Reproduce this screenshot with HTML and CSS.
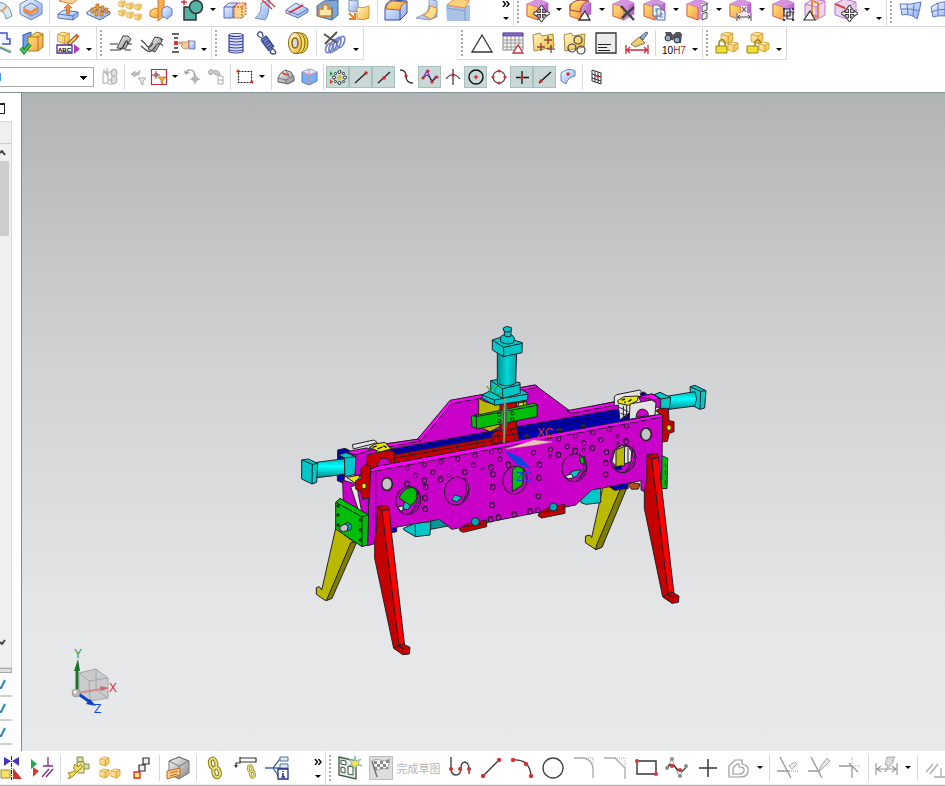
FILE: index.html
```
<!DOCTYPE html>
<html lang="zh-CN">

<head>
    <meta charset="UTF-8">
    <title>CAD</title>
    <link rel="stylesheet" href="styles.css">
</head>

<body>
    <!-- shared icon parts -->
    <svg class="defs" width="0" height="0">
        <defs>
            <linearGradient id="blue" x1="0" y1="0" x2="1" y2="1">
                <stop offset="0" stop-color="#f4f9ff" />
                <stop offset="1" stop-color="#8aabec" />
            </linearGradient>
            <linearGradient id="gold" x1="0" y1="0" x2="1" y2="1">
                <stop offset="0" stop-color="#fff7c8" />
                <stop offset="1" stop-color="#f3b83a" />
            </linearGradient>
            <linearGradient id="orange" x1="0" y1="0" x2="1" y2="1">
                <stop offset="0" stop-color="#ffe873" />
                <stop offset="1" stop-color="#f79b4c" />
            </linearGradient>
            <linearGradient id="violet" x1="0" y1="0" x2="1" y2="0">
                <stop offset="0" stop-color="#f6e6fa" />
                <stop offset="1" stop-color="#b85ccb" />
            </linearGradient>
            <linearGradient id="steel" x1="0" y1="0" x2="1" y2="1">
                <stop offset="0" stop-color="#fafafa" />
                <stop offset="1" stop-color="#858585" />
            </linearGradient>
            <linearGradient id="cylinder" x1="0" y1="0" x2="0" y2="1">
                <stop offset="0" stop-color="#00b4b4" />
                <stop offset=".4" stop-color="#00ffff" />
                <stop offset="1" stop-color="#008f8f" />
            </linearGradient>
            <linearGradient id="column" x1="0" y1="0" x2="1" y2="0">
                <stop offset="0" stop-color="#008f8f" />
                <stop offset=".5" stop-color="#00d8d8" />
                <stop offset="1" stop-color="#00a0a0" />
            </linearGradient>
            <symbol id="syncCube" viewBox="0 0 24 24">
                <path d="M1 6 12 1 22 5 22 16 12 22 1 18Z" fill="url(#violet)" stroke="#a670b5" stroke-width=".7" />
                <path d="M1 6 12 9 12 22 1 18Z" fill="url(#orange)" stroke="#e2502a" stroke-width=".8" />
                <path d="M1 6 12 1 22 5 12 9Z" fill="#d593e0" />
            </symbol>
            <symbol id="goldCube" viewBox="0 0 12 12">
                <path d="M1 3 5 1 11 2 11 8 7 11 1 9Z" fill="url(#gold)" stroke="#c99028" stroke-width=".7" />
                <path d="M1 3 7 4.500 11 2M7 4.500V11" fill="none" stroke="#c99028" stroke-width=".7" />
            </symbol>
            <symbol id="cross4" viewBox="0 0 16 16">
                <path d="M8 0 11 4H9V7H12V5L16 8 12 11V9H9V12H11L8 16 5 12H7V9H4V11L0 8 4 5V7H7V4H5Z" fill="#fff" stroke="#444" stroke-width="1" />
            </symbol>
            <symbol id="caret" viewBox="0 0 6 3">
                <path d="M0 0H6L3 3Z" />
            </symbol>
            <symbol id="chevrons" viewBox="0 0 8 6">
                <path d="M1 0 3.500 3 1 6M4.500 0 7 3 4.500 6" fill="none" stroke="#000" stroke-width="1.400" />
            </symbol>
            <symbol id="chain" viewBox="0 0 16 24">
                <g fill="none" stroke="#85781a" stroke-width="4">
                    <ellipse cx="6" cy="7.500" rx="3.200" ry="5" transform="rotate(-12 6 7)" />
                    <ellipse cx="9.500" cy="16.500" rx="3.200" ry="5" transform="rotate(-12 9 16)" />
                </g>
                <g fill="none" stroke="#eee07a" stroke-width="2">
                    <ellipse cx="6" cy="7.500" rx="3.200" ry="5" transform="rotate(-12 6 7)" />
                    <ellipse cx="9.500" cy="16.500" rx="3.200" ry="5" transform="rotate(-12 9 16)" />
                </g>
            </symbol>
            <symbol id="hole" viewBox="-8 -9 16 18">
                <ellipse rx="6.500" ry="7.500" fill="#9d009d" stroke="#2d1030" stroke-width="2.800" />
                <path d="M-3 4Q3 5 4-2" fill="none" stroke="#ff35ff" stroke-width="2" />
            </symbol>
        </defs>
    </svg>

    <header class="toolbars">
        <div class="row row--offset">
            <div class="bar">
                <button class="tool" title="Revolve"><svg class="icon" viewBox="0 0 24 24"><path d="M8 4Q22 4 24 18L18 21Q17 12 8 11Z" fill="#dbe7ee" stroke="#8096a4" /><path d="M13 14 19 8" stroke="#f0a050" stroke-width="2" /></svg></button>
                <button class="tool" title="Emboss"><svg class="icon" viewBox="0 0 24 24"><path d="M12 0 23 6V16L12 22 1 16V6Z" fill="url(#blue)" stroke="#6f87b5" /><path d="M12 5 19 9V14L12 18 5 14V9Z" fill="#c9daf7" stroke="#6683bd" /><path d="M5 10 12 13 19 8V12L12 17 5 14Z" fill="#f58b3b" /></svg></button>
                <span class="sep"></span>
                <button class="tool" title="Offset"><svg class="icon" viewBox="0 0 24 24"><path d="M3 3 9 0 22 1 16 6Z" fill="#ffd29a" stroke="#e48745" /><path d="M2 16 8 12 22 14V18L17 22 2 20Z" fill="url(#blue)" stroke="#556fc0" /><path d="M2 16 17 18 22 14M17 18V22" fill="none" stroke="#556fc0" /><path d="M12 6 16 10H13.500V16H10.500V10H8Z" fill="#f58a2c" stroke="#b45716" stroke-width=".6" /></svg></button>
                <button class="tool" title="Pattern Feature"><svg class="icon" viewBox="0 0 24 24"><path d="M0 14 10 8 23 14V16L13 22 0 16Z" fill="url(#blue)" stroke="#4d6e9c" /><g fill="#f2a23a" stroke="#9a5a18" stroke-width=".6"><path d="M4 10h3v5H4zM9 6h3v6H9zM14 8h3v6h-3zM8 12h3v6H8zM13 13h3v5h-3zM18 10h3v5h-3z" /></g></svg></button>
                <button class="tool" title="Pattern Geometry"><svg class="icon" viewBox="0 0 24 24"><use href="#goldCube" x="0" y="2" width="8" height="8" /><use href="#goldCube" x="8" y="4" width="8" height="8" /><use href="#goldCube" x="16" y="5" width="8" height="8" /><use href="#goldCube" x="0" y="11" width="8" height="8" /><use href="#goldCube" x="8" y="13" width="8" height="8" /><use href="#goldCube" x="16" y="15" width="8" height="8" /></svg></button>
                <button class="tool" title="Mirror Feature"><svg class="icon" viewBox="0 0 24 24"><path d="M1 13 6 10 11 12V18L6 20 1 18Z" fill="url(#orange)" stroke="#c77a26" /><path d="M9 2 15 0V18L9 23Z" fill="#f9ae49" stroke="#d27728" /><path d="M13 11 18 8 23 11V17L18 21 13 18Z" fill="url(#blue)" stroke="#5a7cbf" /></svg></button>
                <button class="tool" title="Unite"><svg class="icon" viewBox="0 0 24 24"><path d="M4 9H16V22H4Z" fill="#54b3a4" stroke="#333" stroke-width="1.500" /><circle cx="16" cy="9" r="6.500" fill="#54b3a4" stroke="#333" stroke-width="1.500" /><path d="M4 1V7M1 4H7" stroke="#d9363e" stroke-width="1.500" /></svg></button>
                <button class="drop" title="More"><svg viewBox="0 0 6 3"><use href="#caret" /></svg></button>
                <button class="tool" title="Trim Body"><svg class="icon" viewBox="0 0 24 24"><path d="M1 9 6 5H15V16L10 20H1Z" fill="url(#blue)" stroke="#5869b8" /><path d="M1 9H10V20M10 9 15 5" fill="none" stroke="#5869b8" /><path d="M11 9 15 5H23V16L19 20H11Z" fill="#fbd889" stroke="#d33a3a" stroke-dasharray="2 1" /><path d="M11 9H19V20M19 9 23 5" fill="none" stroke="#d33a3a" stroke-dasharray="2 1" /></svg></button>
                <button class="tool" title="Trim Sheet"><svg class="icon" viewBox="0 0 24 24"><path d="M1 20Q8 16 7 5L15 2Q16 16 11 22Z" fill="url(#blue)" stroke="#7690b8" /><path d="M8 2 18 11M12 0 21 9" stroke="#d63940" stroke-width="1.300" /></svg></button>
                <button class="tool" title="Divide Face"><svg class="icon" viewBox="0 0 24 24"><path d="M1 12 11 5 23 11V14L13 20 1 15Z" fill="url(#blue)" stroke="#6177bd" /><path d="M1 12 13 17 23 11" fill="none" stroke="#6177bd" /><path d="M4 15 18 7" stroke="#e02d32" stroke-width="1.500" /></svg></button>
                <button class="tool" title="Shell"><svg class="icon" viewBox="0 0 24 24"><path d="M1 8 8 3 22 2V17L16 22 1 18Z" fill="#7ba7d8" stroke="#456d9b" /><path d="M3 11H7V7H12V11H16V18H3Z" fill="#ffe9a8" stroke="#d58433" stroke-width="1.500" /><path d="M16 9V22" stroke="#456d9b" /></svg></button>
                <button class="tool" title="Replace"><svg class="icon" viewBox="0 0 24 24"><path d="M2 2Q6 4 11 2V13Q6 15 2 13Z" fill="url(#blue)" stroke="#7b92ba" /><path d="M10 9Q16 11 22 8V20Q16 23 10 21Z" fill="url(#gold)" stroke="#d19535" /><path d="M2 15 7 20M8 15V21H2" fill="none" stroke="#ef7d26" stroke-width="2" /></svg></button>
                <span class="sep"></span>
                <button class="tool" title="Edge Blend"><svg class="icon" viewBox="0 0 24 24"><path d="M1 10Q2 4 8 2L23 3V15L16 22H1Z" fill="url(#blue)" stroke="#3548ac" /><path d="M2 10Q3 5 8 3L23 4Q17 6 16 12L2 11Z" fill="url(#orange)" stroke="#b36622" /><path d="M16 12V22" stroke="#3548ac" /></svg></button>
                <button class="tool" title="Face Blend"><svg class="icon" viewBox="0 0 24 24"><path d="M14 1 22 3V19L14 22 1 20 9 16Q15 14 14 1Z" fill="url(#blue)" stroke="#86a0c7" /><path d="M22 10 15 8Q14 15 8 17L16 21Q22 18 22 10Z" fill="#ffe08a" stroke="#ea8636" /></svg></button>
                <button class="tool" title="Draft"><svg class="icon" viewBox="0 0 24 24"><path d="M0 7H24V23H1Z" fill="#a9c3e6" /><path d="M17 0H24V8Z" fill="#c6eef0" /><path d="M1 7 8 1 23 2 19 10Z" fill="#fcd27d" stroke="#ed8251" /><path d="M19 10V23M1 10 19 13" stroke="#8d9cc4" /></svg></button>
                <button class="overflow overflow--end" title="Toolbar Options"><svg width="8" height="6"><use href="#chevrons" /></svg><svg width="6" height="3"><use href="#caret" /></svg></button>
            </div>
            <div class="bar">
                <span class="grip"></span>
                <button class="tool" title="Move Face"><svg class="icon" viewBox="0 0 24 24"><use href="#syncCube" width="24" height="24" /><use href="#cross4" x="7" y="7" width="17" height="17" /></svg></button>
                <button class="drop" title="More"><svg viewBox="0 0 6 3"><use href="#caret" /></svg></button>
                <button class="tool" title="Pull Face"><svg class="icon" viewBox="0 0 24 24"><use href="#syncCube" width="24" height="24" /><path d="M1 9Q3 2 12 2L20 3Q12 5 11 14L1 12Z" fill="url(#orange)" stroke="#9d3e49" /><path d="M16 13 21 22H10Z" fill="#fff" stroke="#333" stroke-width="1.300" /></svg></button>
                <button class="drop" title="More"><svg viewBox="0 0 6 3"><use href="#caret" /></svg></button>
                <button class="tool" title="Delete Face"><svg class="icon" viewBox="0 0 24 24"><use href="#syncCube" width="24" height="24" /><path d="M9 8 22 22M22 9 10 20" stroke="#444" stroke-width="2.500" /></svg></button>
                <button class="tool" title="Copy Face"><svg class="icon" viewBox="0 0 24 24"><use href="#syncCube" width="24" height="24" /><path d="M10 7H15L18 10V18H10ZM14 11H19L22 14V22H14Z" fill="#eef5ff" stroke="#536c9f" /><path d="M12 11H15M12 13H14M16 16H20M16 19H20" stroke="#4f87d4" /></svg></button>
                <button class="drop" title="More"><svg viewBox="0 0 6 3"><use href="#caret" /></svg></button>
                <button class="tool" title="Make Coplanar"><svg class="icon" viewBox="0 0 24 24"><use href="#syncCube" width="24" height="24" /><path d="M15 6H23V23H15Z" fill="#fff" /><path d="M16 8 21 6V12L16 14ZM16 16 21 14V20L16 22Z" fill="#e6eeee" stroke="#4d4d4d" /></svg></button>
                <button class="drop" title="More"><svg viewBox="0 0 6 3"><use href="#caret" /></svg></button>
                <button class="tool" title="Linear Dimension"><svg class="icon" viewBox="0 0 24 24"><use href="#syncCube" width="24" height="24" /><path d="M7 15H23V23H7ZM12 8H18V15H12Z" fill="#fff" opacity=".8" /><path d="M8 15V23M22 15V23M9 19H21M11 17 8.500 19 11 21M19 17 21.500 19 19 21M13 9 17 14M17 9 13 14" fill="none" stroke="#444" /></svg></button>
                <button class="drop" title="More"><svg viewBox="0 0 6 3"><use href="#caret" /></svg></button>
                <button class="tool" title="Group Face"><svg class="icon" viewBox="0 0 24 24"><use href="#syncCube" width="24" height="24" /><path d="M12 11H21V21H12Z" fill="#fff" opacity=".7" /><path d="M12 11H18V18H12ZM15 14H21V21H15Z" fill="none" stroke="#333" stroke-width="1.200" /><path d="M11 10h2v2h-2zM20 10h2v2h-2zM11 21h2v2h-2zM20 21h2v2h-2z" fill="#20309d" /></svg></button>
                <button class="tool" title="Edit Section"><svg class="icon" viewBox="0 0 24 24"><path d="M2 6 10 1 22 3V17L13 22 2 18Z" fill="#ecd6f0" stroke="#b77cc5" /><path d="M9 3 15 5V19L9 17Z" fill="#f7e6ff" stroke="#f0883c" stroke-width="2" /><path d="M2 6 13 9 22 3M13 9V22" fill="none" stroke="#b77cc5" /><path d="M7 13 12 22H1Z" fill="#fff" stroke="#333" stroke-width="1.200" /></svg></button>
                <button class="tool" title="Move Edge"><svg class="icon" viewBox="0 0 24 24"><path d="M1 6 10 1 22 4V16L13 21 1 17Z" fill="#ead3ef" stroke="#b77cc5" /><path d="M1 6 12 11 22 4M12 11V21" fill="none" stroke="#b77cc5" /><path d="M1 6 11 10" stroke="#e3453e" stroke-width="2" /><use href="#cross4" x="7" y="7" width="17" height="17" /></svg></button>
                <button class="drop" title="More"><svg viewBox="0 0 6 3"><use href="#caret" /></svg></button>
                <button class="overflow" title="Toolbar Options"><svg width="8" height="6"></svg><svg width="6" height="3"><use href="#caret" /></svg></button>
            </div>
            <div class="bar bar--open">
                <span class="grip"></span>
                <button class="tool" title="Ruled"><svg class="icon" viewBox="0 0 24 24"><path d="M1 6Q12 7 22 4Q21 12 18 21Q11 15 3 17Z" fill="url(#blue)" stroke="#5a75cc" /><path d="M8 6 9 16M15 5 14 18M2 11Q12 10 20 13" fill="none" stroke="#5a75cc" /></svg></button>
                <button class="tool" title="Through Curves"><svg class="icon" viewBox="0 0 24 24"><path d="M1 9Q10 2 24 4V20Q12 16 3 19Z" fill="url(#blue)" stroke="#5a75cc" /><path d="M8 5V17M15 4V18M1 14Q10 10 24 12" fill="none" stroke="#5a75cc" /></svg></button>
            </div>
        </div>

        <div class="row row--offset">
            <div class="bar">
                <button class="tool" title="Project Curve"><svg class="icon" viewBox="0 0 24 24"><path d="M12 2H19V8H22V13H14" fill="#eef3ff" stroke="#4053d8" stroke-width="1.500" /><path d="M12 16 23 21" stroke="#5796b0" stroke-width="3" /><path d="M12 15 23 20" stroke="#f3e487" /></svg></button>
                <button class="tool" title="Check Geometry"><svg class="icon" viewBox="0 0 24 24"><path d="M4 4 12 1V17L4 20Z" fill="#6f9fec" stroke="#315aa5" /><path d="M12 5 18 1 24 3V16L19 20H9V6Z" fill="url(#orange)" stroke="#ad7b18" /><path d="M9 6H19L24 3M19 6V20" fill="none" stroke="#ad7b18" /><path d="M2 17 5 21 11 13" fill="none" stroke="#16882b" stroke-width="4" /><path d="M2 17 5 21 11 13" fill="none" stroke="#55c25d" stroke-width="2" /></svg></button>
                <span class="sep"></span>
                <button class="tool" title="PMI Note"><svg class="icon" viewBox="0 0 24 24"><use href="#goldCube" x="0" y="0" width="15" height="14" /><path d="M12 14 20 6" stroke="#7d5d29" stroke-width="4" /><path d="M13 13 20 6" stroke="#f6cf4c" stroke-width="2" /><path d="M20 6 22 4" stroke="#e25240" stroke-width="4" /><path d="M1 14H16V22H1Z" fill="#fff" stroke="#4b3191" stroke-width="1.300" /><text class="icon-text" x="2" y="21">ABC</text><path d="M18 13 24 18 18 23Z" fill="#b13ec0" /></svg></button>
                <button class="drop" title="More"><svg viewBox="0 0 6 3"><use href="#caret" /></svg></button>
            </div>
            <div class="bar">
                <span class="grip"></span>
                <button class="tool" title="Sheet Tab"><svg class="icon" viewBox="0 0 24 24"><path d="M8 17 14 5H19L22 8 16 18Z" fill="url(#steel)" stroke="#444" /><path d="M1 13H9M1 19H11Q14 17 16 12 18 7 19 13H23M16 19H22" fill="none" stroke="#333" stroke-width="1.200" /></svg></button>
                <button class="tool" title="Bend"><svg class="icon" viewBox="0 0 24 24"><path d="M8 18 15 6 20 7 22 10 15 21Z" fill="url(#steel)" stroke="#444" /><path d="M1 9Q4 11 7 15 10 18 13 12M1 15 6 19Q11 23 15 16 19 9 23 15M20 7 23 9" fill="none" stroke="#444" stroke-width="1.200" /></svg></button>
                <button class="tool" title="Select Step"><svg class="icon" viewBox="0 0 24 24"><path d="M1 3H8M3 7H7M3 17H7M1 21H8" stroke="#333" stroke-width="1.500" /><path d="M3 10H7V14H3Z" fill="#e03434" /><path d="M8 11H16L18 9V17L13 18 10 15 12 13H8Z" fill="#f5c99a" stroke="#b07647" stroke-width=".7" /><path d="M18 10H24V18H18Z" fill="url(#blue)" stroke="#54559c" stroke-width=".7" /></svg></button>
                <button class="drop" title="More"><svg viewBox="0 0 6 3"><use href="#caret" /></svg></button>
            </div>
            <div class="bar">
                <span class="grip"></span>
                <button class="tool" title="Cylinder Spring"><svg class="icon" viewBox="0 0 24 24"><path d="M5 4H19V20H5Z" fill="#dce0f6" /><g fill="none" stroke="#3340a2" stroke-width="1.200"><ellipse cx="12" cy="4" rx="7" ry="1.500" /><path d="M5 7Q12 9 19 7M5 10Q12 12 19 10M5 13Q12 15 19 13M5 16Q12 18 19 16M5 19Q12 21 19 19M5 21Q12 23 19 21M5 4V21M19 4V21" /></g></svg></button>
                <button class="tool" title="Extension Spring"><svg class="icon" viewBox="0 0 24 24"><path d="M6 9 11 5 19 16 14 20Z" fill="#8895cd" /><g fill="none" stroke="#39478f" stroke-width="1.300"><path d="M8 6Q8 0 4 1 0 5 7 7" /><path d="M6 9 11 5M7 11 12 7M9 13 14 9M10 15 15 11M12 17 17 13M13 19 18 15M6 9 14 20M11 5 19 16M17 17Q24 23 18 23 13 22 17 18" /></g></svg></button>
                <button class="tool" title="Disc Spring"><svg class="icon" viewBox="0 0 24 24"><ellipse cx="15" cy="12" rx="7" ry="10" fill="#f3d23d" stroke="#7e6515" /><ellipse cx="12" cy="12" rx="7" ry="10.500" fill="#f8dc53" stroke="#7e6515" /><ellipse cx="9" cy="12" rx="6.500" ry="10.500" fill="url(#gold)" stroke="#7e6515" /><ellipse cx="9" cy="12" rx="3" ry="5" fill="#dadada" stroke="#7e6515" stroke-width="1.500" /></svg></button>
                <span class="sep"></span>
                <button class="tool" title="Delete Spring"><svg class="icon" viewBox="0 0 24 24"><g fill="none" stroke="#7482c8" stroke-width="1.800"><ellipse cx="6" cy="17" rx="3" ry="5" transform="rotate(25 6 17)" /><ellipse cx="10" cy="15" rx="3" ry="7" transform="rotate(25 10 15)" /><ellipse cx="14" cy="13" rx="3" ry="7" transform="rotate(25 14 13)" /><ellipse cx="18" cy="11" rx="3" ry="6" transform="rotate(25 18 11)" /></g><path d="M1 3 14 12M14 1 2 13" stroke="#555" stroke-width="2" /></svg></button>
                <button class="drop" title="More"><svg viewBox="0 0 6 3"><use href="#caret" /></svg></button>
            </div>
            <div class="bar bar--apart">
                <span class="grip"></span>
                <button class="tool" title="Datum Triangle"><svg class="icon" viewBox="0 0 24 24"><path d="M12 4 22 21H2Z" fill="#fff" stroke="#333" stroke-width="1.300" /></svg></button>
                <button class="tool" title="Table"><svg class="icon" viewBox="0 0 24 24"><path d="M2 2H22V19H2Z" fill="#f5f5f5" stroke="#888" /><path d="M2 2H22V5H2Z" fill="#8065c8" stroke="#654bb1" /><path d="M2 9H22M2 12H22M2 16H22M6 5V19M10 5V19M14 5V19M18 5V19" stroke="#999" /><path d="M17 14 22 22H12Z" fill="#fff" stroke="#cf2f37" stroke-width="1.300" /></svg></button>
                <button class="tool" title="Add to Group"><svg class="icon" viewBox="0 0 24 24"><path d="M1 4 8 2 10 5 21 3 22 16 2 20Z" fill="url(#gold)" stroke="#a78944" /><path d="M9 12V20M5 16H13M16 5V13M12 9H20M19 14V22M15 18H23" stroke="#222" /><path d="M8 15h2v2H8zM15 8h2v2h-2zM18 17h2v2h-2z" fill="#f22" /></svg></button>
                <button class="tool" title="Group"><svg class="icon" viewBox="0 0 24 24"><path d="M1 4 8 2 10 5 22 3 21 16 2 20Z" fill="url(#gold)" stroke="#a78944" /><g fill="none" stroke="#444" stroke-width="1.200"><circle cx="15" cy="9" r="4" /><circle cx="9" cy="17" r="4" /><circle cx="18" cy="19" r="4" /></g></svg></button>
                <button class="tool" title="Title Block"><svg class="icon" viewBox="0 0 24 24"><path d="M2 2H22V22H2Z" fill="#ececec" stroke="#333" stroke-width="1.300" /><path d="M4 13.500H17M4 16.500H13M4 19.500H16" stroke="#222" /></svg></button>
                <button class="tool" title="Style Dimension"><svg class="icon" viewBox="0 0 24 24"><path d="M14 6 20 12 10 16 6 13Z" fill="#edcf72" stroke="#86754b" /><path d="M15 6 18 9 23 2 21 1Z" fill="#91acd1" stroke="#566882" /><path d="M1 14V23M23 14V23M2 19H22M5 16 2 19 5 22M19 16 22 19 19 22" fill="none" stroke="#cc2c38" stroke-width="1.300" /></svg></button>
                <span class="sep"></span>
                <button class="tool" title="Find Fit"><svg class="icon" viewBox="0 0 24 24"><path d="M3 1H9L11 4V9H6ZM14 1H18L20 3 19 12H13L10 5Z" fill="#555" /><circle cx="6" cy="7" r="3" fill="#8fa8d4" stroke="#333" /><circle cx="15" cy="9" r="3" fill="#8fa8d4" stroke="#333" /><text class="fit-text" x="0" y="23">10<tspan fill="#b02b35">H7</tspan></text></svg></button>
                <button class="drop" title="More"><svg viewBox="0 0 6 3"><use href="#caret" /></svg></button>
            </div>
            <div class="bar">
                <span class="grip"></span>
                <button class="tool" title="Lock"><svg class="icon" viewBox="0 0 24 24"><use href="#goldCube" x="5" y="0" width="14" height="14" /><use href="#goldCube" x="12" y="10" width="12" height="12" /><path d="M4 16V11Q7 6 10 11V16" fill="none" stroke="#94851f" stroke-width="1.500" /><path d="M1 15H12V22H1Z" fill="#f1df32" stroke="#96821d" /></svg></button>
                <button class="tool" title="Unlock"><svg class="icon" viewBox="0 0 24 24"><use href="#goldCube" x="4" y="0" width="14" height="14" /><use href="#goldCube" x="12" y="10" width="12" height="12" /><path d="M9 15V11Q12 6 15 12" fill="none" stroke="#94851f" stroke-width="1.500" /><path d="M1 15H12V22H1Z" fill="#f1df32" stroke="#96821d" /></svg></button>
                <button class="drop" title="More"><svg viewBox="0 0 6 3"><use href="#caret" /></svg></button>
            </div>
        </div>

        <div class="row row--select">
            <select class="filter" aria-label="Selection scope">
                <option></option>
            </select>
            <button class="snap" title="Reference Set"><svg class="icon icon--small" viewBox="0 0 20 20"><path d="M3 6H8V16H3ZM8 13H13V17H8M4 5V2M7 1V9M3 5H11" fill="none" stroke="#aaa" /><ellipse cx="14" cy="6" rx="3" ry="4" fill="#ddd" stroke="#aaa" /><ellipse cx="14" cy="13" rx="3" ry="4" fill="#ddd" stroke="#aaa" /></svg></button>
            <span class="sep"></span>
            <button class="snap snap--tight" title="Reset Filter"><svg class="icon icon--small" viewBox="0 0 20 20"><path d="M7 4 3 7 7 10V8Q12 10 12 3 9 7 7 6Z" fill="#bbb" stroke="#999" stroke-width=".5" /><path d="M10 11H18L15 14V18L13 17V14Z" fill="#eee" stroke="#aaa" /></svg></button>
            <button class="snap snap--tight" title="Detailed Filter"><svg class="icon icon--small" viewBox="0 0 20 20"><path d="M2.500 2.500H17.500V17.500H2.500Z" fill="#fff" stroke="#c82938" stroke-width="1.200" /><path d="M7 4V12M3 8H11" stroke="#333" stroke-width=".8" /><circle cx="7" cy="8" r="2" fill="none" stroke="#d23b3b" stroke-width=".8" /><path d="M9 10H17L14 13V17L12 16V13Z" fill="#f2a92a" stroke="#a56b17" stroke-width=".6" /></svg></button>
            <button class="drop" title="More"><svg viewBox="0 0 6 3"><use href="#caret" /></svg></button>
            <button class="snap" title="Undo Pick"><svg class="icon icon--small" viewBox="0 0 20 20"><path d="M3 6Q4 2 8 3T11 8M1 4 3 7 6 5M12 7V17M7 12H17" fill="none" stroke="#999" stroke-width="1.200" /><circle cx="12" cy="12" r="2.500" fill="none" stroke="#999" /></svg></button>
            <button class="snap" title="Pick Up"><svg class="icon icon--small" viewBox="0 0 20 20"><path d="M2 5 5 2 7 4Q13 2 14 8H10L8 6 4 8Z" fill="#ccc" stroke="#999" stroke-width=".8" /><path d="M12 8V17H17V13H12M13 9H17V13" fill="none" stroke="#aaa" /></svg></button>
            <span class="sep"></span>
            <button class="snap" title="Rectangle Select"><svg class="icon icon--small" viewBox="0 0 20 20"><path d="M3.500 4.500H16.500V15.500H3.500Z" fill="none" stroke="#222" stroke-width="1.200" stroke-dasharray="2 1" /><circle cx="3" cy="4" r="1.600" fill="#d33" /><circle cx="17" cy="15" r="1.600" fill="#d33" /></svg></button>
            <button class="drop" title="More"><svg viewBox="0 0 6 3"><use href="#caret" /></svg></button>
            <span class="sep"></span>
            <button class="snap" title="Face Rule"><svg class="icon icon--small" viewBox="0 0 20 20"><path d="M2 11Q4 5 9 3L15 5 18 10V14L12 17 2 15Z" fill="url(#steel)" stroke="#666" /><path d="M2 11 10 13 17 9M10 13V17M9 3Q13 6 13 10" fill="none" stroke="#777" /><path d="M6 6 12 8" stroke="#d33" stroke-width="1.500" /></svg></button>
            <button class="snap" title="Body Rule"><svg class="icon icon--small" viewBox="0 0 20 20"><path d="M3 5 11 2 18 5V14L10 18 3 15Z" fill="#79aff0" stroke="#497fc0" /><path d="M3 5 11 2 18 5 10 8Z" fill="#d8e7fc" /><path d="M10 2V18M4 5 10 8 18 5" fill="none" stroke="#e28593" /></svg></button>
            <span class="sep"></span>
            <button class="snap snap--on" title="Enable Snap"><svg class="icon icon--small" viewBox="0 0 20 20"><path d="M2 4 5 7 2 9Z" fill="#15a53b" /><path d="M2 12 5 15 2 17Z" fill="#d33" /><g fill="#fff" stroke="#222"><circle cx="11.500" cy="5" r="1.500" /><circle cx="6" cy="10.500" r="1.500" /><circle cx="17" cy="10.500" r="1.500" /><circle cx="11.500" cy="16" r="1.500" /><circle cx="7.500" cy="6.500" r="1" /><circle cx="15.500" cy="6.500" r="1" /><circle cx="7.500" cy="14.500" r="1" /><circle cx="15.500" cy="14.500" r="1" /></g><path d="M11.500 8V13M9 10.500H14" stroke="#e6bd21" stroke-width="2" /></svg></button>
            <button class="snap snap--on" title="End Point"><svg class="icon icon--small" viewBox="0 0 20 20"><path d="M4 16 15 6" stroke="#222" stroke-width="1.300" /><circle cx="15" cy="6" r="1.800" fill="#d32b2b" /></svg></button>
            <button class="snap snap--on" title="Mid Point"><svg class="icon icon--small" viewBox="0 0 20 20"><path d="M4 16 16 5" stroke="#222" stroke-width="1.300" /><circle cx="10" cy="11" r="1.800" fill="#d32b2b" /></svg></button>
            <button class="snap" title="Control Point"><svg class="icon icon--small" viewBox="0 0 20 20"><path d="M3 3Q9 3 9 9 9 16 16 16" fill="none" stroke="#333" stroke-width="1.300" /><circle cx="9" cy="9" r="1.700" fill="#d32b2b" /></svg></button>
            <button class="snap snap--on" title="Pole"><svg class="icon icon--small" viewBox="0 0 20 20"><path d="M3 11 7 4 12 15 16 9" fill="none" stroke="#8a37c4" stroke-width="1.500" /><path d="M3 12Q7 5 10 11T17 9" fill="none" stroke="#222" /><g fill="#d32b2b"><circle cx="3" cy="11" r="1.600" /><circle cx="8" cy="4" r="1.600" /><circle cx="12" cy="15" r="1.600" /><circle cx="17" cy="10" r="1.600" /></g></svg></button>
            <button class="snap" title="Intersection Point"><svg class="icon icon--small" viewBox="0 0 20 20"><path d="M10 2V18M3 12Q10 3 17 12" fill="none" stroke="#333" stroke-width="1.200" /><circle cx="10" cy="8" r="1.700" fill="#d32b2b" /></svg></button>
            <button class="snap snap--on" title="Arc Center"><svg class="icon icon--small" viewBox="0 0 20 20"><circle cx="10" cy="10" r="7" fill="none" stroke="#111" stroke-width="1.400" /><circle cx="10" cy="10" r="1.500" fill="#d32b2b" /><path d="M10 7.500V12.500M7.500 10H12.500" stroke="#d32b2b" stroke-width=".7" /></svg></button>
            <button class="snap" title="Quadrant Point"><svg class="icon icon--small" viewBox="0 0 20 20"><circle cx="10" cy="10" r="6" fill="none" stroke="#555" stroke-width="1.200" /><g fill="#d32b2b"><circle cx="10" cy="4" r="1.600" /><circle cx="4" cy="10" r="1.600" /><circle cx="16" cy="10" r="1.600" /><circle cx="10" cy="16" r="1.600" /></g></svg></button>
            <button class="snap snap--on" title="Existing Point"><svg class="icon icon--small" viewBox="0 0 20 20"><path d="M10 4V17M4 10.500H17" stroke="#111" stroke-width="1.300" /><circle cx="10" cy="10.500" r="1.600" fill="#d32b2b" /></svg></button>
            <button class="snap snap--on" title="Point on Curve"><svg class="icon icon--small" viewBox="0 0 20 20"><path d="M4 16 16 5" stroke="#111" stroke-width="1.300" /><circle cx="6" cy="14" r="1.700" fill="#d32b2b" /></svg></button>
            <button class="snap" title="Point on Surface"><svg class="icon icon--small" viewBox="0 0 20 20"><path d="M3 6Q10 0 17 4V9Q10 10 8 17L3 14Z" fill="url(#blue)" stroke="#6286b8" /><circle cx="10" cy="7" r="1.700" fill="#d32b2b" /></svg></button>
            <span class="sep"></span>
            <button class="snap" title="Bounded Grid"><svg class="icon icon--small" viewBox="0 0 20 20"><path d="M5 3 14 6V17L5 14ZM8 4V15M11 5V16M5 7 14 10M5 11 14 14" fill="none" stroke="#333" /><circle cx="10.500" cy="9.500" r="1.300" fill="#d33" /></svg></button>
        </div>
    </header>

    <main class="workspace">
        <aside class="navigator">
            <button class="navigator__pin" title="Restore"></button>
            <div class="navigator__list">
                <div class="navigator__head"></div>
                <div class="navigator__arrow"><svg viewBox="0 0 8 6" width="8" height="6"><path d="M0 3 2 1 5 5" fill="none" stroke="#444" stroke-width="2" /></svg></div>
                <div class="navigator__thumb"></div>
                <div class="navigator__arrow navigator__arrow--down"><svg viewBox="0 0 8 6" width="8" height="6"><path d="M0 3 2 5 5 1" fill="none" stroke="#444" stroke-width="2" /></svg></div>
            </div>
            <div class="navigator__split"></div>
            <div class="navigator__group"><svg viewBox="0 0 8 12" width="8" height="12"><path d="M0 9 1 9 5 1" fill="none" stroke="#2387b5" stroke-width="2" /></svg></div>
            <div class="navigator__group"><svg viewBox="0 0 8 12" width="8" height="12"><path d="M0 9 1 9 5 1" fill="none" stroke="#2387b5" stroke-width="2" /></svg></div>
            <div class="navigator__group"><svg viewBox="0 0 8 12" width="8" height="12"><path d="M0 9 1 9 5 1" fill="none" stroke="#2387b5" stroke-width="2" /></svg></div>
        </aside>

        <section class="viewport">
            <svg class="scene" viewBox="22 93 923 658">
                <g class="model" transform="translate(400 320) scale(.33333)">
                    <!-- rear legs -->
                    <g transform="translate(-330 180)">
                        <path class="olive" d="M137 445 190 485 118 658 105 661 79 643 79 623 88 620 95 630 102 600Z" />
                        <path class="olive-dark" d="M183 487 200 487 126 655 109 662Z" />
                        <path class="cyan" d="M340 445 375 430 422 425 420 465 376 470 342 450Z" />
                        <path d="M376 435V469" />
                        <path class="cyan-dark" d="M422 420 460 415 490 435 422 448Z" />
                        <path class="blue" d="M300 440 320 440 320 455 306 458Z" />
                    </g>
                    <g transform="translate(480 150)">
                        <path class="olive" d="M130 345 200 350 125 530 108 539 76 518 77 498 90 495 95 503Z" />
                        <path class="olive-dark" d="M182 355 200 355 126 532 106 539 110 525Z" />
                        <path class="cyan" d="M60 370 80 355 122 355 122 398 78 403 63 398Z" />
                        <path class="blue" d="M148 350 200 335 205 355 164 361Z" />
                        <path class="orange" d="M202 342 218 338 240 342 235 357 215 358Z" />
                        <path class="green" d="M302 255 323 265 321 356 302 355Z" />
                        <path d="M316 280V290M316 300V315M316 330V345" />
                    </g>

                    <!-- back plate -->
                    <path class="magenta" d="M-45 372 52 358 155 241 405 195 510 273 690 235 690 340 -30 440Z" />
                    <path class="magenta-light" d="M52 358 150 241 405 195 412 199 404 204 155 251 63 361Z" />
                    <path class="magenta-light" d="M-45 372 52 358 63 363 -30 380ZM500 272 690 238 690 247 515 280Z" />

                    <!-- rails -->
                    <path class="blue" d="M-30 388 300 329 650 268 700 290 700 320 -30 405Z" />
                    <path d="M-30 396 280 343M350 331 670 278M350 340 670 288" stroke="#000056" />
                    <path class="red" d="M-20 405 290 350 350 345 358 365 -20 432Z" />
                    <path d="M-20 415 280 361M30 410V400M100 398V388M170 386V376M230 376V366" />
                    <path class="navy" d="M465 334Q475 318 490 330ZM540 320Q552 308 560 318ZM370 352Q375 337 390 348Z" />

                    <!-- left carriage -->
                    <g transform="translate(-330 180)">
                        <path class="blue" d="M143 210 165 205 180 212 160 310 142 302Z" />
                        <path class="magenta" d="M158 300 190 310 235 330 238 420 160 370Z" />
                        <path class="white" d="M182 320 200 315 215 395 205 390Z" />
                        <path class="magenta" d="M185 220 230 205 260 210 245 285 195 290Z" />
                        <path class="magenta-light" d="M170 215 230 204 245 209 195 225Z" />
                        <path class="white" d="M187 194 252 180 262 188 190 207Z" />
                        <path class="yellow" d="M238 202 255 192 285 187 303 207 270 216Z" />
                        <path d="M247 202 260 198M262 207 278 201M280 197 290 203" stroke-width="4" />
                        <path class="red" d="M232 225 300 210 315 218 312 260 245 270 230 262Z" />
                        <path class="magenta" d="M262 262Q262 238 282 234 302 236 302 255Z" />
                        <path class="yellow" d="M170 292 210 285 200 312Z" />
                        <path fill="url(#cylinder)" d="M80 247 165 236 165 283 80 293Z" />
                        <path class="cyan" d="M35 240 55 237 83 250 80 307 66 312 35 297Z" />
                        <path d="M35 240 67 253 83 250M67 253 66 312" />
                        <path class="cyan" d="M145 225 168 218 198 230 195 283 165 290 163 235Z" />
                        <path d="M145 225 165 234 198 230" />
                    </g>

                    <!-- right carriage -->
                    <g transform="translate(480 150)">
                        <path class="white" d="M163 80 170 74 240 60 250 72 250 95 180 150 175 105 163 108Z" />
                        <path class="blue" d="M240 70 252 66 260 72 245 80Z" />
                        <path class="magenta" d="M235 80 275 72 305 82 300 112 250 110Z" />
                        <path class="magenta-light" d="M235 80 275 72 305 82 285 90Z" />
                        <path class="white" d="M210 102 275 90 288 98 285 135 208 148Z" />
                        <path class="magenta" d="M228 142Q230 118 247 117 266 120 265 137Z" />
                        <path class="yellow" d="M173 92 192 80 235 78 232 92 205 106 175 100Z" />
                        <path d="M185 90 195 87M205 95 215 88M195 100V94" stroke-width="4" />
                        <path d="M178 112 205 125M182 130 205 138M190 108V150M200 105V148" />
                        <path class="cyan" d="M390 50 405 46 438 62 434 114 420 118 393 105Z" />
                        <path d="M390 50 422 64 438 62M422 64 420 118" />
                        <path fill="url(#cylinder)" d="M325 78 405 65Q414 85 405 108L328 118Z" />
                        <path class="cyan" d="M282 74 300 67 332 82 328 118 302 120 302 88Z" />
                        <path d="M282 74 304 87 332 82" />
                        <path class="red" d="M288 122 300 115 325 115 327 152 342 155 342 185 328 190 322 214 306 216 306 138Z" />
                        <ellipse class="yellow" cx="327" cy="173" rx="7" ry="9" />
                    </g>

                    <!-- centre cylinder -->
                    <path class="olive" d="M236 235 255 245 280 252 380 245 382 280 352 292 270 335 248 325 236 290Z" />
                    <path class="yellow" d="M355 250 370 246 370 285 355 290Z" />
                    <path class="red" d="M300 252 350 248 350 320 358 365 280 370 273 345 300 325Z" />
                    <path d="M300 270H350M280 335 350 325M278 350 355 342M290 330 302 368M330 325 345 360" />
                    <path class="green" d="M214 288 230 283 230 325 216 320Z" />
                    <path class="green" d="M220 288 400 250 412 255 411 290 229 327 229 290Z" />
                    <path d="M229 290 412 256" />
                    <path class="cyan" d="M246 225 275 210 362 208 384 220 383 240 285 256 247 235Z" />
                    <path d="M246 225 283 240 384 222M283 240V255" />
                    <path class="cyan" d="M272 182 295 178 360 188 361 220 308 235 272 215Z" />
                    <path d="M272 182 308 206 361 194M308 206V235" />
                    <path fill="url(#column)" d="M292 100 350 95 347 190Q320 205 292 190Z" />
                    <path class="cyan" d="M277 60 308 50 367 68 366 98 310 110 277 90Z" />
                    <path d="M277 60 311 82 367 70M311 82V109" />
                    <path class="cyan" d="M302 50Q310 42 322 43 338 42 343 54L341 68Q320 77 302 65Z" />
                    <path class="cyan" d="M313 30H333V48Q322 54 313 47Z" />
                    <path class="cyan" d="M310 24 320 19 334 23 334 33 321 37 310 31Z" />
                    <g>
                        <circle cx="298" cy="284" r="5" /><circle cx="337" cy="280" r="5" />
                        <circle cx="298" cy="303" r="5" /><circle cx="337" cy="298" r="5" />
                    </g>

                    <!-- front plate -->
                    <path class="magenta" d="M-90 448 788 285 785 480 740 497 738 517 723 510 723 482 575 510 527 555 155 628 118 598 -30 625 -72 670 -98 677Z" />
                    <path class="magenta-light" d="M-90 448 -65 438 780 283 788 285 788 291 -88 456Z" />
                    <path d="M-73 450V668" />

                    <!-- windows of the front plate -->
                    <g>
                        <ellipse class="magenta" cx="25" cy="541" rx="37" ry="42" transform="rotate(15 25 541)" />
                        <path class="magenta-light" d="M52 510Q72 545 30 581 58 550 52 510Z" />
                        <path class="green" d="M-3 533Q10 505 35 502 52 505 51 530 46 550 30 557Z" />
                        <path class="cyan" d="M8 565 14 545 32 557 22 570Z" />
                        <path class="white" d="M-6 560 10 558 8 573 0 572Z" />
                        <ellipse class="magenta" cx="170" cy="513" rx="36" ry="42" transform="rotate(15 170 513)" />
                        <path class="magenta-light" d="M195 475Q220 503 188 545 206 515 195 475Z" />
                        <path class="cyan" d="M155 540 164 525 186 531 170 545Z" />
                        <ellipse class="magenta" cx="345" cy="480" rx="36" ry="42" transform="rotate(15 345 480)" />
                        <path class="green" d="M337 448 352 439 370 445 368 495 337 514Z" />
                        <ellipse class="magenta" cx="523" cy="443" rx="37" ry="42" transform="rotate(15 523 443)" />
                        <path class="magenta-light" d="M552 408Q572 440 535 480 558 450 552 408Z" />
                        <path class="green" d="M538 410 550 412 553 433 542 430Z" />
                        <path class="cyan" d="M500 466 520 453 544 448 528 470 508 475Z" />
                        <path class="white" d="M495 468 515 462 520 474 505 476Z" />
                        <ellipse class="magenta" cx="670" cy="416" rx="37" ry="42" transform="rotate(15 670 416)" />
                        <path class="magenta-light" d="M697 383Q718 420 675 457 702 425 697 383Z" />
                        <path class="white" d="M645 390 665 377 685 380 695 395 693 425 650 440 636 425Z" />
                        <path class="olive" d="M648 390 674 379 673 438 648 440Z" />
                        <path d="M684 382V430" />
                        <path class="blue" d="M640 442 665 437 665 449 650 450Z" />
                    </g>
                    <ellipse class="grey" cx="-39" cy="492" rx="16" ry="19" stroke-width="5" />
                    <ellipse class="grey" cx="738" cy="343" rx="16" ry="19" stroke-width="5" />

                    <!-- bolt holes -->
                    <g class="holes">
                        <use href="#hole" x="14" y="434" width="16" height="18" /><use href="#hole" x="65" y="424" width="16" height="18" /><use href="#hole" x="115" y="416" width="16" height="18" /><use href="#hole" x="165" y="407" width="16" height="18" /><use href="#hole" x="217" y="396" width="16" height="18" /><use href="#hole" x="266" y="386" width="16" height="18" /><use href="#hole" x="292" y="382" width="16" height="18" />
                        <use href="#hole" x="38" y="457" width="16" height="18" /><use href="#hole" x="90" y="447" width="16" height="18" /><use href="#hole" x="12" y="481" width="18" height="20" /><use href="#hole" x="64" y="471" width="18" height="20" /><use href="#hole" x="68" y="491" width="18" height="20" /><use href="#hole" x="66" y="523" width="18" height="20" /><use href="#hole" x="66" y="557" width="18" height="20" />
                        <use href="#hole" x="112" y="468" width="18" height="20" /><use href="#hole" x="140" y="459" width="12" height="14" /><use href="#hole" x="185" y="446" width="18" height="20" /><use href="#hole" x="212" y="426" width="16" height="18" /><use href="#hole" x="242" y="440" width="12" height="14" /><use href="#hole" x="264" y="432" width="18" height="20" /><use href="#hole" x="270" y="452" width="18" height="20" />
                        <use href="#hole" x="269" y="491" width="18" height="20" /><use href="#hole" x="267" y="545" width="18" height="20" /><use href="#hole" x="263" y="588" width="18" height="20" /><use href="#hole" x="286" y="582" width="18" height="20" /><use href="#hole" x="334" y="573" width="18" height="20" /><use href="#hole" x="381" y="564" width="18" height="20" /><use href="#hole" x="404" y="560" width="18" height="20" />
                        <use href="#hole" x="291" y="408" width="16" height="18" /><use href="#hole" x="316" y="424" width="18" height="20" /><use href="#hole" x="392" y="388" width="16" height="18" /><use href="#hole" x="409" y="424" width="18" height="20" /><use href="#hole" x="408" y="463" width="18" height="20" /><use href="#hole" x="406" y="518" width="18" height="20" /><use href="#hole" x="443" y="379" width="16" height="18" /><use href="#hole" x="444" y="401" width="12" height="14" />
                        <use href="#hole" x="466" y="394" width="18" height="20" /><use href="#hole" x="468" y="347" width="16" height="18" /><use href="#hole" x="518" y="338" width="16" height="18" /><use href="#hole" x="493" y="370" width="16" height="18" /><use href="#hole" x="516" y="382" width="18" height="20" /><use href="#hole" x="543" y="360" width="16" height="18" /><use href="#hole" x="545" y="383" width="12" height="14" />
                        <use href="#hole" x="568" y="374" width="18" height="20" /><use href="#hole" x="570" y="328" width="16" height="18" /><use href="#hole" x="619" y="318" width="16" height="18" /><use href="#hole" x="671" y="308" width="16" height="18" /><use href="#hole" x="594" y="350" width="16" height="18" /><use href="#hole" x="646" y="342" width="12" height="14" /><use href="#hole" x="646" y="363" width="12" height="14" />
                        <use href="#hole" x="669" y="354" width="18" height="20" /><use href="#hole" x="610" y="386" width="18" height="20" /><use href="#hole" x="608" y="419" width="18" height="20" /><use href="#hole" x="608" y="453" width="18" height="20" />
                    </g>

                    <!-- feet under the plate -->
                    <path class="red" d="M178 626 200 612 260 600 260 620 190 637 180 632ZM415 582 440 565 494 553 495 580 425 594 415 588Z" />
                    <path d="M192 620 260 610M430 575 494 567" />
                    <circle class="teal" cx="226" cy="605" r="12" />
                    <circle class="teal" cx="460" cy="561" r="12" />

                    <!-- left bracket and front leg -->
                    <g transform="translate(-330 180)">
                        <path class="red" d="M213 265 225 255 242 258 238 355 218 357 213 335 197 327 197 302 213 295Z" />
                        <ellipse class="yellow" cx="222" cy="318" rx="7" ry="9" />
                        <path class="green" d="M137 367 150 355 236 405 233 495 216 500 137 447Z" />
                        <path d="M137 367 216 410 236 405M216 410V500" />
                        <g fill="#007d00">
                            <circle cx="144" cy="378" r="4" /><circle cx="144" cy="405" r="4" /><circle cx="144" cy="435" r="4" />
                            <circle cx="211" cy="420" r="4" /><circle cx="211" cy="450" r="4" /><circle cx="211" cy="480" r="4" />
                        </g>
                        <circle class="teal" cx="173" cy="440" r="12" />
                        <path class="grey" d="M150 440 165 432 174 438 172 452 160 455 150 450Z" />
                        <path class="red" d="M262 380 278 388 330 800 340 823 311 805 254 535 254 485 260 450Z" />
                        <path class="red-light" d="M276 392 298 388 304 455 344 797 327 797Z" />
                        <path class="red" d="M262 379 290 376 298 387 276 392ZM327 797 335 790 360 802 358 822 338 824 312 805 325 798 340 806Z" />
                    </g>
                    <g transform="translate(480 150)">
                        <path class="red" d="M261 255 277 265 328 675 337 700 308 680 253 415 253 365 260 330Z" />
                        <path class="red-light" d="M275 267 296 263 303 335 342 670 325 672Z" />
                        <path class="red" d="M261 254 290 250 297 262 275 267ZM325 672 333 665 357 678 355 697 337 700 309 681 323 673 338 682Z" />
                    </g>
                </g>

                <!-- work coordinate system -->
                <g class="axes">
                    <path d="M504 443 502 414 505 400 508 414Z" fill="#26783a" stroke="#5e8d60" stroke-width=".5" />
                    <path d="M504 443 505 398" stroke="#b0a890" />
                    <path d="M506 449 534 440 552 442 535 445Z" fill="#f2c3bd" stroke="#c99" stroke-width=".5" />
                    <path d="M505 451 520 457 531 469 516 464Z" fill="#0846df" />
                    <text x="486" y="395" fill="#299b35">YC</text>
                    <text x="537" y="437" fill="#dc3232">XC</text>
                    <text x="516" y="481" fill="#1744e8">ZC</text>
                </g>

                <!-- view triad -->
                <g class="triad">
                    <path d="M79 673 96 669 108 678V698L90 701 79 693Z" fill="#c9cbcc" stroke="#a5a7a9" />
                    <path d="M79 673 89 681 108 678M89 681 90 701M96 669V690L108 698M96 690 79 693" fill="none" stroke="#a5a7a9" />
                    <path d="M77 693 102 689" stroke="#d28a8e" stroke-width="2" />
                    <path d="M100 686 109 688 101 691Z" fill="#c9686e" />
                    <path d="M77 692V668" stroke="#17752a" stroke-width="3" />
                    <path d="M74 671 78 659 80 671Z" fill="#17752a" />
                    <path d="M77 693 90 702" stroke="#0d40c8" stroke-width="3" />
                    <path d="M90 699 96 706 86 704Z" fill="#0d40c8" />
                    <circle cx="76" cy="693" r="4" fill="#b7b7b7" stroke="#888" stroke-width=".6" />
                    <circle cx="75" cy="692" r="1.500" fill="#fff" />
                    <text x="74" y="658" fill="#299b35">Y</text>
                    <text x="109" y="692" fill="#cf3038">X</text>
                    <text x="94" y="713" fill="#1744e8">Z</text>
                </g>
            </svg>
        </section>
    </main>

    <footer class="row row--bottom">
        <div class="bar">
            <button class="tool" title="Mirror"><svg class="icon" viewBox="0 0 24 24"><path d="M5 1 12 5 5 10ZM20 1 13 5 20 10Z" fill="#4337bd" /><path d="M12.500 0V24" stroke="#222" stroke-dasharray="4 1 1 1" /><path d="M2 14H11V22H2Z" fill="#f5e36c" stroke="#a08825" /><path d="M14 12 23 23H14Z" fill="#d23530" /></svg></button>
            <button class="tool" title="Constraints"><svg class="icon" viewBox="0 0 24 24"><path d="M1 3 7 8 1 13Z" fill="#24a654" /><path d="M3 11 9 15 3 21Z" fill="#d93a35" /><path d="M18 1V10M13 10H23M12 21 19 13M16 21 23 13" fill="none" stroke="#82287d" stroke-width="1.300" /></svg></button>
            <span class="sep"></span>
            <button class="tool" title="Edit Parameters"><svg class="icon" viewBox="0 0 24 24"><path d="M10 6H16V1H10ZM12 8H22V13H12Z" fill="#d8dda0" stroke="#8b8d49" /><path d="M10 6H17V17H11Z" fill="#eaeb9d" stroke="#8b8d49" /><path d="M1 17 3 20 1 23 5 21 12 14Q17 12 14 8L11 11 8 8Q5 14 9 15Z" fill="#efd957" stroke="#a08a2e" /></svg></button>
            <button class="tool" title="Assembly"><svg class="icon" viewBox="0 0 24 24"><use href="#goldCube" x="1" y="0" width="11" height="11" /><use href="#goldCube" x="1" y="12" width="11" height="11" /><use href="#goldCube" x="12" y="12" width="11" height="11" /></svg></button>
            <button class="tool" title="Sequence"><svg class="icon" viewBox="0 0 24 24"><path d="M14 2H20V8H14ZM10 9H16V15H10Z" fill="#eee" stroke="#333" stroke-width="1.200" /><path d="M5 16H11V22H5Z" fill="#f9e874" stroke="#e52525" stroke-width="1.300" /></svg></button>
            <span class="sep"></span>
            <button class="tool" title="Properties"><svg class="icon" viewBox="0 0 24 24"><path d="M3 5 13 1 23 5V17L13 23 3 18Z" fill="url(#steel)" stroke="#777" /><path d="M3 5 13 1 23 5 13 10ZM13 10V23" fill="none" stroke="#777" /><path d="M1 15 14 12V19L1 23Z" fill="#f9c780" stroke="#b66e2a" /><path d="M4 17 12 15M4 20 11 18" stroke="#bf722b" /></svg></button>
            <span class="sep"></span>
            <button class="tool" title="Link"><svg class="icon" viewBox="0 0 24 24"><use href="#chain" x="4" y="0" width="16" height="24" /></svg></button>
            <button class="tool" title="Edit Link"><svg class="icon" viewBox="0 0 24 24"><path d="M6 2H22V6H6M6 1V7H2V11" fill="none" stroke="#333" stroke-width="1.200" /><path d="M0 9H4L2 12Z" fill="#333" /><use href="#chain" x="12" y="8" width="11" height="15" /></svg></button>
            <button class="tool" title="Information"><svg class="icon" viewBox="0 0 24 24"><path d="M0 12H8L15 3H23M8 12H23M8 12 14 21" fill="none" stroke="#4766a8" stroke-width="1.300" /><path d="M15 1H23V5H15ZM15 8H23V12H15Z" fill="#dfecf2" stroke="#547592" /><path d="M13 13H23V23H13Z" fill="#fff" stroke="#1e2e87" stroke-width="1.300" /><path d="M18 15V16M17 18H18V21M16.500 21H20" fill="none" stroke="#1e2e87" stroke-width="1.500" /></svg></button>
            <button class="overflow overflow--bottom" title="Toolbar Options"><svg width="8" height="6"><use href="#chevrons" /></svg><svg width="6" height="3"><use href="#caret" /></svg></button>
        </div>
        <div class="bar bar--open">
            <span class="grip"></span>
            <button class="tool" title="Sketch"><svg class="icon" viewBox="0 0 24 24"><path d="M1 1 18 5V23L1 19Z" fill="#e8efe8" stroke="#3c5644" stroke-width="1.300" /><path d="M3 4 8 5V9L3 8ZM10 10 15 11V19L10 18ZM3 11 7 12V17L3 16Z" fill="#fff" stroke="#3c5644" /><path d="M17 0 18 5 23 3 20 7 24 10 19 9 17 13 15 9 11 10 14 7 11 3 16 5Z" fill="#f3e649" stroke="#75a6bb" stroke-width=".8" /></svg></button>
            <button class="finish" disabled><svg class="icon" viewBox="0 0 24 24"><path d="M.500 .500H23.500V23.500H.500Z" fill="#dedede" stroke="#bbb" /><path d="M3 5Q7 2 11 4T21 3L19 13Q15 12 12 13T6 14Z" fill="#f5f5f5" stroke="#aaa" /><path d="M3 5 8 21" stroke="#777" stroke-width="1.500" /><path d="M5 5H8V8H5ZM11 5H14V8H11ZM17 4H20V7H17ZM8 8H11V11H8ZM14 8H17V11H14ZM11 11H14V13H11ZM6 11H8V14H6ZM17 11H19V13H17Z" fill="#888" /></svg>完成草图</button>
            <button class="tool" title="Profile"><svg class="icon" viewBox="0 0 24 24"><path d="M3 1V14Q4 19 8 19 13 19 13 12 13 6 17 6 22 7 21 18" fill="none" stroke="#444" stroke-width="1.400" /><g fill="#d63434"><circle cx="3" cy="13" r="2" /><circle cx="12" cy="13" r="2" /><circle cx="21" cy="13" r="2" /></g></svg></button>
            <button class="tool" title="Line"><svg class="icon" viewBox="0 0 24 24"><path d="M4 20 20 4" stroke="#333" stroke-width="1.300" /><circle cx="4" cy="20" r="2.200" fill="#d63434" /><circle cx="20" cy="4" r="2.200" fill="#d63434" /></svg></button>
            <button class="tool" title="Arc"><svg class="icon" viewBox="0 0 24 24"><path d="M3 4Q20 3 21 20" fill="none" stroke="#333" stroke-width="1.300" /><g fill="#d63434"><circle cx="3" cy="4" r="2.200" /><circle cx="16" cy="8" r="2.200" /><circle cx="21" cy="20" r="2.200" /></g></svg></button>
            <button class="tool" title="Circle"><svg class="icon" viewBox="0 0 24 24"><circle cx="12" cy="12" r="10" fill="none" stroke="#444" stroke-width="1.400" /></svg></button>
            <button class="tool" title="Fillet"><svg class="icon" viewBox="0 0 24 24"><path d="M2 2H9Q21 2 21 15V22" fill="none" stroke="#aaa" stroke-width="1.300" /><path d="M10 2H21V14" fill="none" stroke="#aaa" stroke-dasharray="1 1" /></svg></button>
            <button class="tool" title="Chamfer"><svg class="icon" viewBox="0 0 24 24"><path d="M1 2H12L22 12V23" fill="none" stroke="#aaa" stroke-width="1.300" /><path d="M12 2H22V12" fill="none" stroke="#aaa" stroke-dasharray="1 1" /></svg></button>
            <button class="tool" title="Rectangle"><svg class="icon" viewBox="0 0 24 24"><path d="M3 5H22V18H3Z" fill="none" stroke="#333" stroke-width="1.400" /><circle cx="3" cy="5" r="2" fill="#d63434" /><circle cx="22" cy="18" r="2" fill="#d63434" /></svg></button>
            <button class="tool" title="Spline"><svg class="icon" viewBox="0 0 24 24"><path d="M2 12 7 3 14 20 22 10" fill="none" stroke="#999" /><path d="M2 12Q6 5 11 12T22 10" fill="none" stroke="#333" stroke-width="1.300" /><g fill="#8d8d8d"><circle cx="2" cy="12" r="2" /><circle cx="7" cy="3" r="2" /><circle cx="15" cy="20" r="2" /><circle cx="21" cy="10" r="2" /></g><circle cx="7" cy="10" r="2" fill="#d63434" /><circle cx="15" cy="14" r="2" fill="#d63434" /></svg></button>
            <button class="tool" title="Point"><svg class="icon" viewBox="0 0 24 24"><path d="M12 3V21M3 12H21" stroke="#333" stroke-width="1.500" /></svg></button>
            <button class="tool" title="Offset Curve"><svg class="icon" viewBox="0 0 24 24"><path d="M2 21V10L8 4H15V8Q22 9 21 15 21 21 13 21Z" fill="none" stroke="#999" stroke-width="1.200" /><path d="M6 18V12L10 8H12V11Q18 11 17 15 16 18 12 18Z" fill="none" stroke="#999" stroke-width="1.200" /></svg></button>
            <button class="drop" title="More"><svg viewBox="0 0 6 3"><use href="#caret" /></svg></button>
            <span class="sep"></span>
            <button class="tool" title="Quick Trim"><svg class="icon" viewBox="0 0 24 24"><path d="M4 1 15 22M1 15H13" stroke="#999" stroke-width="1.300" /><path d="M13 15H22" stroke="#999" stroke-dasharray="1 1" /><path d="M13 10 19 6 21 8 16 13Z" fill="#eee" stroke="#aaa" /></svg></button>
            <button class="tool" title="Quick Extend"><svg class="icon" viewBox="0 0 24 24"><path d="M4 1 15 22M1 15H13" stroke="#999" stroke-width="1.300" /><path d="M12 15 14 10 20 2 23 5 16 12Z" fill="#e5e5e5" stroke="#aaa" /></svg></button>
            <button class="tool" title="Make Corner"><svg class="icon" viewBox="0 0 24 24"><path d="M1 10H14V22M11 7 20 16" fill="none" stroke="#999" stroke-width="1.300" /><path d="M14 1V10H23" fill="none" stroke="#aaa" stroke-dasharray="1 1" /></svg></button>
            <span class="sep"></span>
            <button class="tool" title="Rapid Dimension"><svg class="icon" viewBox="0 0 24 24"><path d="M1 7V19M22 7V19M2 13H21M6 10 2 13 6 16M17 10 21 13 17 16" fill="none" stroke="#999" stroke-width="1.200" /><path d="M12 1H20L17 5H19L10 16 13 9H10Z" fill="#ddd" stroke="#aaa" /></svg></button>
            <button class="drop" title="More"><svg viewBox="0 0 6 3"><use href="#caret" /></svg></button>
            <span class="sep"></span>
            <button class="tool" title="Geometric Constraints"><svg class="icon" viewBox="0 0 24 24"><path d="M2 16 9 8M6 18 14 8M17 12V21M10 21H24" fill="none" stroke="#aaa" stroke-width="1.300" /></svg></button>
        </div>
    </footer>
</body>

</html>
```

FILE: styles.css
```
html {
    box-sizing: border-box;
}

*,
*:before,
*:after {
    box-sizing: inherit;
}

body {
    margin: 0;
    height: 100vh;
    display: flex;
    flex-direction: column;
    overflow: hidden;
    background: #fff;
    font-family: "Liberation Sans", "Noto Sans CJK SC", sans-serif;
    font-size: 11px;
}

button {
    flex: none;
    display: flex;
    align-items: center;
    justify-content: center;
    margin: 0;
    padding: 0;
    border: 0;
    background: none;
    font: inherit;
}

svg {
    flex: none;
    display: block;
}

.defs {
    position: absolute;
}

/* Toolbars */
.toolbars {
    flex: none;
    margin-top: -7px;
}

.row {
    display: flex;
    height: 34px;
}

.row--offset {
    padding-bottom: 1px;
    margin-left: -16px;
}

.bar {
    flex: none;
    display: flex;
    align-items: center;
    padding-right: 1px;
    border-right: 1px solid #dcdcdc;
    border-bottom: 1px solid #dcdcdc;
}

.bar--apart {
    margin-left: 93px;
    border-left: 1px solid #eee;
}

.bar--open {
    flex: 1;
    border-right: 0;
}

.row--offset:first-child {
    border-bottom: 1px solid #dcdcdc;
    padding-bottom: 0;
}

.row--offset:first-child .bar {
    border-bottom: 0;
}

.grip {
    flex: none;
    width: 5px;
    height: 26px;
    margin-left: 3px;
    border-left: 2px dotted #aaa;
}

.sep {
    flex: none;
    width: 6px;
    height: 26px;
    background: linear-gradient(#d8d8d8, #d8d8d8) center / 1px 100% no-repeat;
}

.tool {
    width: 31px;
    height: 30px;
}

.icon {
    width: 24px;
    height: 24px;
    overflow: visible;
}

.icon--small {
    width: 20px;
    height: 20px;
}

.drop {
    width: 12px;
    height: 24px;
    padding-top: 12px;
}

.drop svg {
    width: 6px;
    height: 3px;
}

.row--offset:first-child .drop {
    padding-top: 0;
}

.overflow {
    flex-direction: column;
    justify-content: space-between;
    width: 12px;
    height: 24px;
    padding: 3px 0 2px;
}

.overflow--end {
    margin-left: 27px;
}

.overflow--bottom {
    margin-left: 20px;
}

.icon-text {
    font-size: 6px;
    font-weight: bold;
}

.fit-text {
    font-size: 10px;
}

/* Selection bar */
.row--select {
    align-items: center;
    height: 31px;
}

.row--select .drop {
    padding-top: 0;
}

.filter {
    flex: none;
    width: 94px;
    height: 20px;
    margin-right: 4px;
    border: 1px solid #a9a9a9;
    border-left: 0;
    border-radius: 0;
    appearance: none;
    background:
        linear-gradient(135deg, #000 50%, transparent 50%) 84px 8px / 4px 4px no-repeat,
        linear-gradient(225deg, #000 50%, transparent 50%) 80px 8px / 4px 4px no-repeat,
        linear-gradient(#3c9cec, #3c9cec) 0 5px / 1px 8px no-repeat,
        #fff;
}

.snap {
    width: 23px;
    height: 22px;
}

.snap--tight {
    width: 21px;
}

.snap--on {
    border: 1px solid #a9c1be;
    background: #c8d8d6;
}

/* Workspace */
.workspace {
    flex: 1;
    display: flex;
    min-height: 0;
    border-top: 1px solid #849197;
}

.navigator {
    flex: none;
    display: flex;
    flex-direction: column;
    width: 22px;
    padding: 10px 9px 6px 0;
    border-right: 1px solid #7f8d92;
}

.navigator__pin {
    width: 5px;
    height: 11px;
    margin-bottom: 7px;
    border: 1px solid #222;
    border-top-width: 2px;
    border-left: 0;
}

.navigator__list {
    flex: 1;
    display: flex;
    flex-direction: column;
    border: 1px solid #dadada;
    border-left: 0;
    background: #f0f0f0;
}

.navigator__head {
    height: 22px;
    border-bottom: 1px solid #ccc;
}

.navigator__arrow {
    height: 17px;
    padding-top: 6px;
}

.navigator__arrow--down {
    height: 34px;
    margin-top: auto;
}

.navigator__thumb {
    width: 9px;
    height: 75px;
    background: #cdcdcd;
}

.navigator__split {
    height: 5px;
    border: 1px solid #aaa;
    border-left: 0;
    background: #ddd;
}

.navigator__group {
    height: 24px;
    padding-top: 6px;
    border-bottom: 2px solid #d0d0d0;
}

.viewport {
    flex: 1;
    min-width: 0;
    background: linear-gradient(#b1b3b5 0%, #c4c6c8 24%, #d1d2d3 42%, #e4e6e8 80%, #e7e9eb 100%);
}

.scene {
    width: 100%;
    height: 100%;
}

/* Model */
.model {
    fill: none;
    stroke: #26202a;
    stroke-width: 3;
    stroke-linejoin: round;
}

.magenta {
    fill: #c800c8;
}

.magenta-light {
    fill: #ff00ff;
}

.red {
    fill: #c40000;
}

.red-light {
    fill: #ff0000;
}

.green {
    fill: #00be08;
}

.blue {
    fill: #0000b4;
}

.navy {
    fill: #303060;
}

.cyan {
    fill: #00c8c8;
}

.cyan-dark {
    fill: #009797;
}

.teal {
    fill: #00a5b0;
}

.olive {
    fill: #b9b900;
}

.olive-dark {
    fill: #7d7d00;
}

.yellow {
    fill: #e8e800;
}

.orange {
    fill: #b9501a;
}

.white {
    fill: #e3e3e3;
}

.grey {
    fill: #c4c4c4;
}

.axes,
.triad {
    font-size: 12px;
}

/* Bottom toolbar */
.row--bottom {
    flex: none;
    height: 35px;
    border-bottom: 1px solid #b0b0b0;
    margin-left: -5px;
}

.row--bottom .bar {
    border-bottom-color: #eee;
}

.row--bottom .drop {
    padding-top: 0;
}

.finish {
    gap: 4px;
    width: 79px;
    height: 26px;
    color: #b5b5b5;
    white-space: nowrap;
}
```
